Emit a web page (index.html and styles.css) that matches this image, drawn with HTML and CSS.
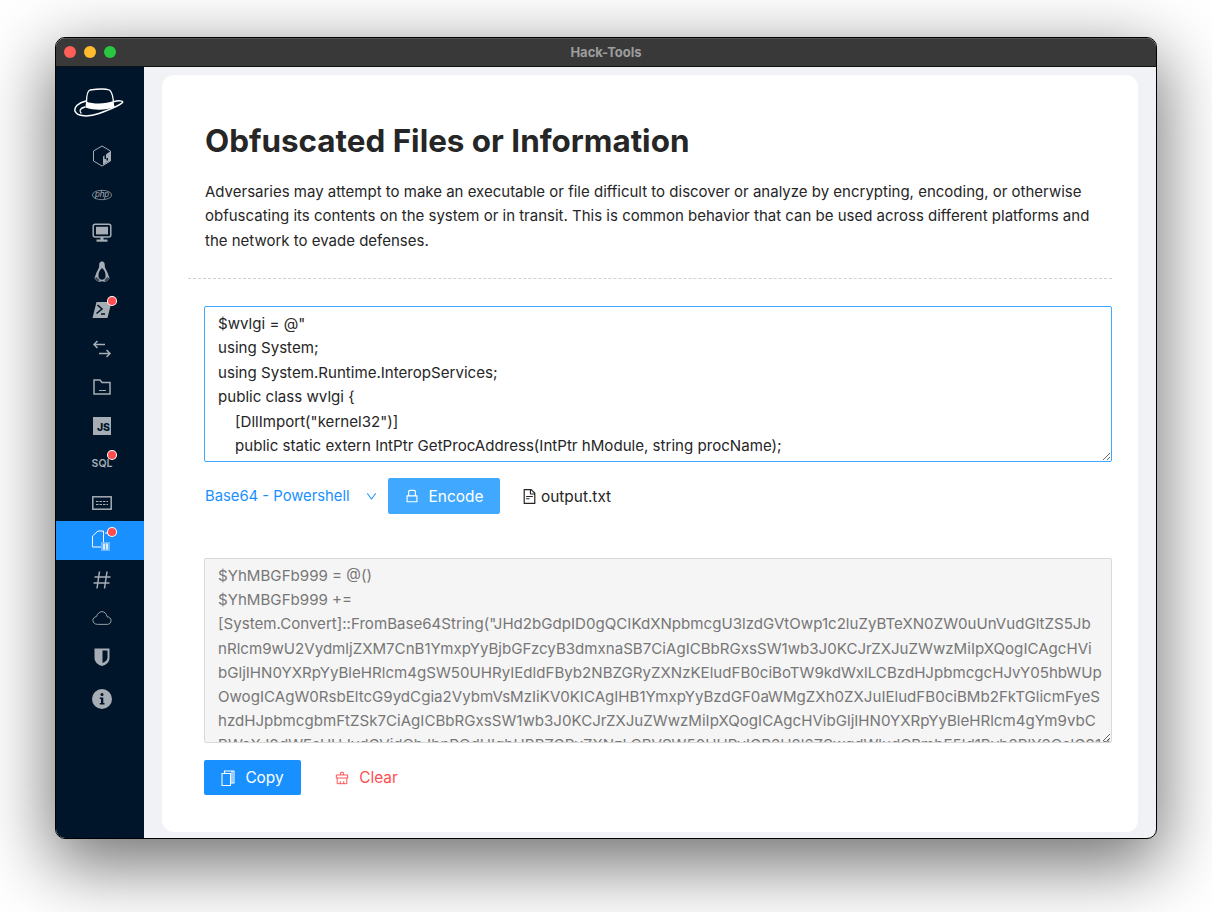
FILE: index.html
```html
<!DOCTYPE html>
<html lang="en">
<head>
<meta charset="utf-8">
<title>Hack-Tools</title>
<link rel="stylesheet" href="styles.css">
</head>
<body>
<div class="window">
  <header class="titlebar">
    <div class="lights"><span class="light red"></span><span class="light yellow"></span><span class="light green"></span></div>
    <div class="title">Hack-Tools</div>
  </header>
  <div class="app">
    <nav class="sidebar">
      <div class="logo">
        <svg width="50" height="30" viewBox="0 0 50 30" fill="none" stroke="#fff" stroke-width="1.3" stroke-linecap="round">
          <path d="M12.500 14C12.500 8 13.500 3 16 2C24 .8 32 .8 35.500 2C38 4 39 9 39.500 14"/>
          <path fill="#fff" stroke="none" d="M12 13.500C20 16.500 32 16 39.500 13L40.500 19C32 22.500 20 22.500 11.500 19.500Z"/>
          <path stroke-width="1.500" d="M12 13C4 15 0 19 1 23C3 29 15 29 25 25.500C36 21.500 46 17 48.500 14.500C49.500 12.500 44 12.500 40.500 13.500"/>
          <path d="M11 19C6 20 5 23 7 25"/>
        </svg>
      </div>
      <ul class="menu">
        <li class="item"><svg class="ico node" viewBox="0 0 20 22"><path class="ln" d="M10 1L18.500 6V16L10 21L1.500 16V6Z"/><path class="fl" d="M18 6.500V15.700L11 20V11.500Z"/><rect x="12.500" y="9" width="1.500" height="5" fill="#001529"/><rect x="14.500" y="13" width="1.500" height="2.500" fill="#001529"/></svg></li>
        <li class="item"><svg class="ico php" viewBox="0 0 20 10"><ellipse class="ln thin" cx="10" cy="5" rx="9.600" ry="4.700"/><text class="php-t" x="10" y="7.400" text-anchor="middle">php</text></svg></li>
        <li class="item"><svg class="ico" viewBox="0 0 20 20"><rect class="ln wide" x="1.200" y="1.200" width="17.600" height="12.800" rx="2"/><rect class="fl" x="4" y="3.800" width="12" height="7.600"/><rect class="fl" x="8.500" y="14" width="3" height="3"/><rect class="fl" x="4.500" y="16.500" width="11" height="2.200"/></svg></li>
        <li class="item"><svg class="ico tux" viewBox="0 0 16 22"><path class="fl" d="M8 .5C5.500 .5 5 3 5.200 5.500C5 8 2.500 10 1.800 13.500C1.500 15 .5 16 .5 17.500C1.500 19 3.500 20.500 5.500 21C7 20 9 20 10.500 21C12.500 20.500 14.500 19 15.500 17.500C15.500 16 14.500 15 14.200 13.500C13.500 10 11 8 10.800 5.500C11 3 10.500 .5 8 .5Z"/><path d="M8 7C5.500 9 4 12 4.500 16C5.500 19.500 10.500 19.500 11.500 16C12 12 10.500 9 8 7Z" fill="#001529"/><path d="M.5 17.500C1.500 19 3.500 20.500 5.500 21L5.200 18.500L2.500 16ZM15.500 17.500C14.500 19 12.500 20.500 10.500 21L10.800 18.500L13.500 16Z" fill="#3a4a5a"/></svg></li>
        <li class="item"><svg class="ico" viewBox="0 0 20 18"><path class="fl" d="M4.500 1H19.500L15.500 17H.5Z"/><path d="M5.500 4L10 8L4.500 12.500M9 13H13" fill="none" stroke="#001529" stroke-width="1.600"/></svg><span class="badge"></span></li>
        <li class="item"><svg class="ico" viewBox="0 0 20 18"><path class="ln wide" d="M2 4.500H13M5.500 1L2 4.500L5.500 8M7 13.500H18M14.500 10L18 13.500L14.500 17"/></svg></li>
        <li class="item"><svg class="ico fold" viewBox="0 0 18 16"><path class="ln wide" d="M1 1H7L9 3.500H17V15H1ZM9 3.500H17"/><path class="ln" d="M6 11.500H13"/></svg></li>
        <li class="item"><div class="js">JS</div></li>
        <li class="item"><span class="sql">SQL</span><span class="badge"></span></li>
        <li class="item"><svg class="ico kbd" viewBox="0 0 20 14"><rect class="ln wide" x=".8" y=".8" width="18.400" height="12.400"/><path class="ln" stroke-dasharray="2.500 1" d="M4 5.500H16M4 8.500H16"/></svg></li>
        <li class="item active"><svg class="ico filep" viewBox="0 0 20 22"><path class="ln white" d="M10 17H.5V6L6 1H11.500V14M13 3H17V6"/><rect x="9" y="12" width="9" height="9" fill="#6cb8ff"/><path class="ln white wide" d="M12 13.500V19.500M15 13.500V19.500"/></svg><span class="badge"></span></li>
        <li class="item"><svg class="ico" viewBox="0 0 20 20"><path class="ln wide" d="M7.500 1.500L5 18.500M15 1.500L12.500 18.500M2.500 7H18.500M1.500 13H17.500"/></svg></li>
        <li class="item"><svg class="ico" viewBox="0 0 22 16"><path class="ln" d="M6 15C3 15 1 13 1 10.500C1 8.500 2.500 6.800 4.800 6.500C6 3 8.500 1 11 1C14 1 16 3.500 16.500 6.500C19 6.800 21 8.500 21 10.800C21 13.200 19.200 15 17 15Z"/></svg></li>
        <li class="item"><svg class="ico" viewBox="0 0 18 20"><path class="fl" d="M1.500 1.500H16.500V11C16.500 15 13 18 9 19C5 18 1.500 15 1.500 11Z"/><path d="M9.500 3.500H14.500V10.500C14.500 13 12.500 15 9.500 16Z" fill="#001529"/></svg></li>
        <li class="item info"><svg class="ico" viewBox="0 0 20 20"><circle class="fl" cx="10" cy="10" r="10"/><circle cx="10" cy="5.500" r="1.500" fill="#001529"/><path d="M7.800 8.500H11.300V14H12.500V15.500H7.800V14H9V10H7.800Z" fill="#001529"/></svg></li>
      </ul>
    </nav>
    <main class="content">
      <section class="card">
        <div class="intro">
          <h1 class="heading">Obfuscated Files or Information</h1>
          <p class="lead">Adversaries may attempt to make an executable or file difficult to discover or analyze by encrypting, encoding, or otherwise obfuscating its contents on the system or in transit. This is common behavior that can be used across different platforms and the network to evade defenses.</p>
        </div>
        <div class="divider"></div>
        <div class="tool">
          <textarea class="box input" wrap="off" spellcheck="false">$wvlgi = @"
using System;
using System.Runtime.InteropServices;
public class wvlgi {
    [DllImport("kernel32")]
    public static extern IntPtr GetProcAddress(IntPtr hModule, string procName);
    [DllImport("kernel32")]
    public static extern IntPtr LoadLibrary(string name);</textarea>
          <div class="controls">
            <div class="select"><span>Base64 - Powershell</span>
              <svg class="chev" viewBox="64 64 896 896"><path d="M884 256h-75c-5.100 0-9.900 2.500-12.900 6.600L512 654.200 227.900 262.600c-3-4.100-7.800-6.600-12.900-6.600h-75c-6.500 0-10.300 7.400-6.500 12.700l352.600 486.100c12.800 17.600 39 17.600 51.700 0l352.600-486.100c3.900-5.300.1-12.700-6.400-12.700z"/></svg>
            </div>
            <button class="btn light-primary"><svg class="btn-ico" viewBox="64 64 896 896"><path d="M832 464h-68V240c0-70.700-57.300-128-128-128H388c-70.700 0-128 57.300-128 128v224h-68c-17.700 0-32 14.300-32 32v384c0 17.700 14.300 32 32 32h640c17.700 0 32-14.300 32-32V496c0-17.700-14.300-32-32-32zM332 240c0-30.900 25.100-56 56-56h248c30.900 0 56 25.100 56 56v224H332V240zm460 600H232V536h560v304z"/></svg><span>Encode</span></button>
            <div class="file"><svg class="file-ico" viewBox="64 64 896 896"><path d="M854.600 288.600L639.400 73.400c-6-6-14.100-9.400-22.600-9.400H192c-17.700 0-32 14.300-32 32v832c0 17.700 14.300 32 32 32h640c17.700 0 32-14.300 32-32V311.300c0-8.500-3.400-16.700-9.400-22.700zM790.200 326H602V137.800L790.200 326zm1.800 562H232V136h302v216a42 42 0 0 0 42 42h216v494zM504 618H320c-4.400 0-8 3.600-8 8v48c0 4.400 3.600 8 8 8h184c4.400 0 8-3.600 8-8v-48c0-4.400-3.600-8-8-8zM312 490v48c0 4.400 3.600 8 8 8h384c4.400 0 8-3.600 8-8v-48c0-4.400-3.600-8-8-8H320c-4.400 0-8 3.600-8 8z"/></svg><span>output.txt</span></div>
          </div>
          <textarea class="box output" wrap="off" disabled>$YhMBGFb999 = @()
$YhMBGFb999 +=
[System.Convert]::FromBase64String("JHd2bGdpID0gQCIKdXNpbmcgU3lzdGVtOwp1c2luZyBTeXN0ZW0uUnVudGltZS5Jb
nRlcm9wU2VydmljZXM7CnB1YmxpYyBjbGFzcyB3dmxnaSB7CiAgICBbRGxsSW1wb3J0KCJrZXJuZWwzMiIpXQogICAgcHVi
bGljIHN0YXRpYyBleHRlcm4gSW50UHRyIEdldFByb2NBZGRyZXNzKEludFB0ciBoTW9kdWxlLCBzdHJpbmcgcHJvY05hbWUp
OwogICAgW0RsbEltcG9ydCgia2VybmVsMzIiKV0KICAgIHB1YmxpYyBzdGF0aWMgZXh0ZXJuIEludFB0ciBMb2FkTGlicmFyeS
hzdHJpbmcgbmFtZSk7CiAgICBbRGxsSW1wb3J0KCJrZXJuZWwzMiIpXQogICAgcHVibGljIHN0YXRpYyBleHRlcm4gYm9vbC
BWaXJ0dWFsUHJvdGVjdChJbnRQdHIgbHBBZGRyZXNzLCBVSW50UHRyIGR3U2l6ZSwgdWludCBmbE5ld1Byb3RlY3QsIG91dCB1</textarea>
          <div class="actions">
            <button class="btn primary"><svg class="btn-ico copy-ico" viewBox="0 0 14 16" fill="none" stroke="#fff" stroke-width="1.100"><path d="M1 3.500H9.500V15.500H1Z"/><path d="M3.500 3.500V1H13V13H9.500M11 1V13"/></svg><span>Copy</span></button>
            <button class="btn ghost"><svg class="btn-ico clear-ico" viewBox="0 0 16 16" fill="none" stroke="#ff4d4f" stroke-width="1.100"><path d="M6.500 4.500V1.500H9.500V4.500M1.500 4.500H14.500V8H1.500ZM2.500 8V14.500H13.500V8M6 14.500V11.500M10 14.500V11.500"/></svg><span>Clear</span></button>
          </div>
        </div>
      </section>
    </main>
  </div>
</div>
</body>
</html>
```
FILE: styles.css
```css
* { box-sizing: border-box; }
html, body { margin: 0; padding: 0; background: #fff; }
body { width: 1212px; height: 912px; overflow: hidden; padding: 37px 55px; font-family: Inter, "Liberation Sans", sans-serif; }
.window { width: 1102px; height: 802px; border: 1px solid #000; border-radius: 10px; overflow: hidden; display: flex; flex-direction: column; background: #f0f2f5; box-shadow: 0 22px 70px 4px rgba(0,0,0,.56); }
.titlebar { height: 29px; flex: none; padding-bottom: 1px; background: #393939; border-bottom: 1px solid #111; box-shadow: inset 0 1px 0 #555; display: flex; align-items: center; position: relative; }
.lights { display: flex; gap: 8px; padding-left: 8px; }
.light { width: 12px; height: 12px; border-radius: 50%; }
.red { background: #ff5f57; }
.yellow { background: #febc2e; }
.green { background: #28c840; }
.title { position: absolute; left: 0; right: 0; text-align: center; font-size: 13px; font-weight: 700; color: #9d9d9d; }
.app { flex: 1; display: flex; min-height: 0; }
.sidebar { width: 88px; flex: none; background: #001529; color: #fff; }
.logo { height: 69px; padding: 21px 0 0 18px; }
.logo svg { display: block; }
.menu { list-style: none; margin: 0; padding: 0; }
.item { height: 38.500px; display: flex; align-items: center; justify-content: center; padding: 2px 0 0 4px; position: relative; }
.active { background: #1890ff; padding-top: 1px; }
.info { padding-top: 9px; }
.ico { width: 20px; height: 20px; display: block; overflow: visible; }
.node { width: 20px; height: 22px; }
.php { width: 20px; height: 10px; }
.php-t { font-family: "Liberation Sans", sans-serif; font-size: 8.500px; font-style: italic; fill: #a6adb4; }
.tux { width: 16px; height: 22px; }
.fold { width: 18px; height: 16px; }
.kbd { width: 20px; height: 14px; }
.filep { width: 20px; height: 22px; }
.ln { fill: none; stroke: #a6adb4; stroke-width: 1; }
.thin { stroke-width: .7; }
.wide { stroke-width: 1.500; }
.white { stroke: #fff; }
.fl { fill: #a6adb4; }
.js { width: 18px; height: 18px; background: #a6adb4; color: #001529; font-size: 10.500px; font-weight: 800; line-height: 1; display: flex; align-items: flex-end; justify-content: flex-end; padding: 0 1px 1px 0; }
.sql { font-size: 10.500px; font-weight: 600; color: #a6adb4; padding-bottom: 2px; }
.badge { position: absolute; left: 52px; top: 7px; width: 8px; height: 8px; border-radius: 50%; background: #ff4d4f; box-shadow: 0 0 0 1px #fff; }
.content { flex: 1; min-width: 0; padding: 8px 18px 6px; }
.card { height: 100%; background: #fff; border-radius: 12px; padding: 0 26px; }
.intro { padding: 46px 0 0 17px; }
.heading { margin: 0; font-size: 31.400px; line-height: 40px; font-weight: 700; color: #262626; }
.lead { margin: 19px 0 0; font-size: 15px; line-height: 24.400px; color: #262626; }
.divider { margin-top: 24.800px; border-top: 1px dashed #d2d2d2; }
.tool { padding: 27px 0 0 16px; }
.box { display: block; width: 100%; margin: 0; padding: 5px 13px; font-family: inherit; font-size: 15.100px; line-height: 24.400px; border: 1px solid #d9d9d9; border-radius: 2px; resize: vertical; overflow: hidden; white-space: pre; outline: none; }
.input { height: 156px; border-color: #40a9ff; color: #262626; }
.output { height: 185px; margin-top: 44px; padding: 5px 13px 0; line-height: 24.200px; background: #f5f5f5; color: #777; }
.controls { display: flex; align-items: center; height: 36px; margin-top: 16px; }
.select { width: 184px; padding-left: 1px; display: flex; align-items: center; font-size: 14.800px; color: #1890ff; }
.chev { width: 11px; height: 11px; margin-left: 16px; fill: #1890ff; }
.btn { display: inline-flex; align-items: center; justify-content: center; height: 35px; border: 0; border-radius: 2px; font-family: inherit; font-size: 15.400px; padding: 0; }
.btn-ico { width: 15px; height: 15px; margin-right: 10px; }
.copy-ico { width: 14px; height: 16px; }
.clear-ico { width: 14px; height: 14px; margin-left: 2px; }
.light-primary { width: 112px; height: 36px; background: #40a9ff; color: #fff; }
.light-primary .btn-ico { fill: #fff; width: 14px; height: 14px; }
.primary { width: 97px; background: #1890ff; color: #fff; }
.ghost { width: 95px; margin-left: 17px; background: transparent; color: #ff4d4f; }
.file { display: flex; align-items: center; margin-left: 22px; font-size: 15.400px; color: #262626; }
.file-ico { width: 15px; height: 15px; margin-right: 4px; fill: #262626; }
.actions { display: flex; margin-top: 17px; }
```
